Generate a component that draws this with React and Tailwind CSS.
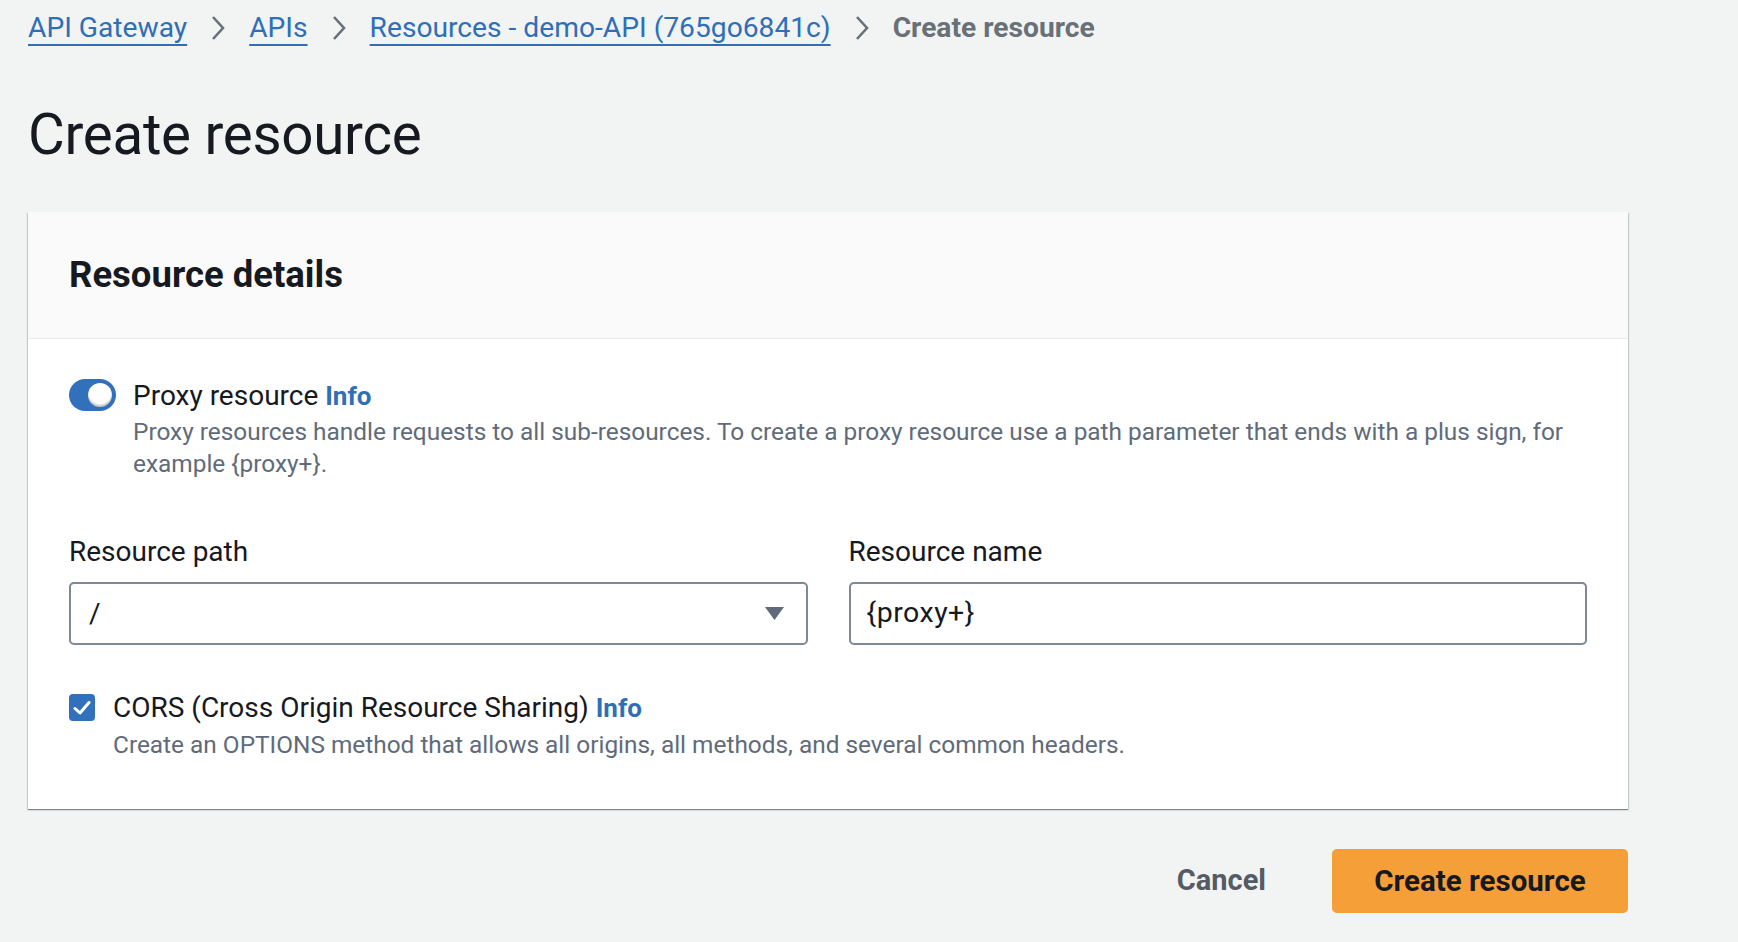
const proxyDesc =
  'Proxy resources handle requests to all sub-resources. To create a proxy resource use a path parameter that ends with a plus sign, for example {proxy+}.';

export default function App() {
  return (
    <div
      className="min-h-screen bg-[#f2f3f3] text-[#16191f]"
      style={{ fontFamily: 'Roboto, "Open Sans", sans-serif' }}
    >
      <div className="w-[1600px] ml-[28px]">
        <Breadcrumbs />

        <h1 className="mt-[47px] text-[56.5px] leading-[64px] font-normal tracking-[-0.3px]">
          Create resource
        </h1>

        <div className="mt-[45px] bg-white shadow-[0_1px_1px_0_rgba(0,28,36,0.3),1px_1px_1px_0_rgba(0,28,36,0.15),-1px_1px_1px_0_rgba(0,28,36,0.15)]">
          <div className="h-[127px] flex items-center px-[41px] bg-[#fafafa] border-b border-[#e9ebed]">
            <h2 className="text-[36.5px] font-bold leading-none">Resource details</h2>
          </div>

          <div className="px-[41px] pt-[39px] pb-[48px]">
            <div className="flex gap-[17px]">
              <Toggle />
              <div>
                <div className="text-[28px] leading-[36px]">
                  Proxy resource <InfoLink />
                </div>
                <p className="mt-[2px] text-[24.4px] leading-[32px] text-[#5f6b7a]">{proxyDesc}</p>
              </div>
            </div>

            <div className="mt-[54px] grid grid-cols-2 gap-[41px]">
              <div>
                <label className="block text-[28px] leading-[36px]">Resource path</label>
                <div className="mt-[12px] h-[63px] flex items-center justify-between pl-[18px] pr-[22px] border-2 border-[#7d8998] rounded-[5px]">
                  <span className="text-[28px]">/</span>
                  <svg width="19" height="13" viewBox="0 0 19 13">
                    <path d="M0 0 H19 L9.5 13 Z" fill="#5f6b7a" />
                  </svg>
                </div>
              </div>
              <div>
                <label className="block text-[28px] leading-[36px]">Resource name</label>
                <div className="mt-[12px] h-[63px] flex items-center pl-[16px] border-2 border-[#7d8998] rounded-[5px]">
                  <span className="text-[28.5px] tracking-[0.5px]">{'{proxy+}'}</span>
                </div>
              </div>
            </div>

            <div className="mt-[45px] flex gap-[18px]">
              <div className="pt-[4px]">
                <Checkbox />
              </div>
              <div>
                <div className="text-[28px] leading-[36px]">
                  CORS (Cross Origin Resource Sharing) <InfoLink />
                </div>
                <p className="mt-[3px] text-[24.4px] leading-[32px] text-[#5f6b7a]">
                  Create an OPTIONS method that allows all origins, all methods, and several common headers.
                </p>
              </div>
            </div>
          </div>
        </div>

        <div className="mt-[40px] flex items-center justify-end gap-[66px]">
          <button className="text-[29px] font-bold text-[#545b64]">Cancel</button>
          <button className="h-[64px] w-[296px] rounded-[5px] bg-[#f49f38] text-[29.5px] font-bold text-[#16191f]">
            Create resource
          </button>
        </div>
      </div>
    </div>
  );
}

function Breadcrumbs() {
  const links = ['API Gateway', 'APIs', 'Resources - demo-API (765go6841c)'];
  return (
    <nav className="flex items-center h-[56px] text-[28.2px]">
      {links.map((l) => (
        <span key={l} className="flex items-center">
          <a
            href="#"
            className="text-[#2e6fb7] underline decoration-2 underline-offset-[7px]"
          >
            {l}
          </a>
          <Chevron />
        </span>
      ))}
      <span className="font-bold text-[#687078]">Create resource</span>
    </nav>
  );
}

function Chevron() {
  return (
    <svg className="mx-[23px]" width="16" height="28" viewBox="0 0 16 28">
      <path d="M3 3 L13 14 L3 25" fill="none" stroke="#687078" strokeWidth="2.6" />
    </svg>
  );
}

function InfoLink() {
  return <a href="#" className="text-[26px] font-bold text-[#2e6fb7]">Info</a>;
}

function Toggle() {
  return (
    <div className="mt-[1px] w-[47px] h-[32px] shrink-0 rounded-full bg-[#3171bc] flex items-center justify-end pr-[4px]">
      <div className="w-[24px] h-[24px] rounded-full bg-white shadow-[inset_0_-2px_2px_rgba(0,0,0,0.25)]" />
    </div>
  );
}

function Checkbox() {
  return (
    <div className="w-[26px] h-[27px] rounded-[4px] bg-[#3171bc] flex items-center justify-center">
      <svg width="18" height="16" viewBox="0 0 18 16">
        <path d="M2 8.5 L7 13 L16 2.5" fill="none" stroke="white" strokeWidth="3" strokeLinecap="round" strokeLinejoin="round" />
      </svg>
    </div>
  );
}
